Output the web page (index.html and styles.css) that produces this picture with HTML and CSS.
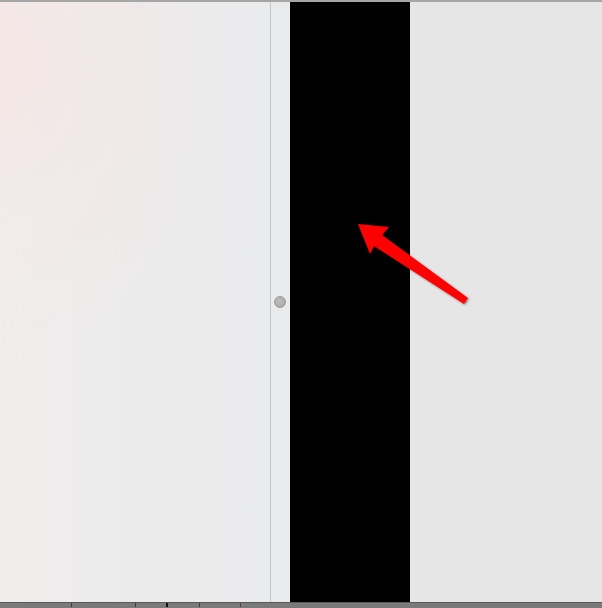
FILE: index.html
```html
<!DOCTYPE html>
<html>
<head>
<meta charset="utf-8">
<link rel="stylesheet" href="styles.css">
</head>
<body>
<div class="app">
  <div class="topline"></div>
  <div class="main">
    <div class="sidebar"></div>
    <div class="divider"><span class="handle"></span></div>
    <div class="preview"></div>
    <div class="inspector"></div>
  </div>
  <div class="statusbar">
    <span class="tick t1"></span><span class="tick t2"></span><span class="tick t3"></span><span class="tick t4"></span><span class="tick t5"></span>
  </div>
  <svg class="arrow" width="602" height="608" viewBox="0 0 602 608">
    <defs>
      <filter id="sh" x="-20%" y="-20%" width="140%" height="140%">
        <feDropShadow dx="1" dy="1" stdDeviation="1" flood-color="#000" flood-opacity="0.45"/>
      </filter>
    </defs>
    <polygon points="358,224 389,227 382,235 468,298 464,304 374,246 370,254" fill="#ff0000" filter="url(#sh)"/>
  </svg>
</div>
</body>
</html>
```
FILE: styles.css
```css
html, body {
  margin: 0;
  padding: 0;
  width: 602px;
  height: 608px;
  overflow: hidden;
  font-family: "Liberation Sans", Arial, sans-serif;
}
.app {
  position: relative;
  width: 602px;
  height: 608px;
  display: flex;
  flex-direction: column;
}
.topline {
  height: 2px;
  background: #a6a6a6;
  flex: none;
}
.main {
  flex: 1;
  display: flex;
  min-height: 0;
}
.sidebar {
  width: 270px;
  flex: none;
  background:
    radial-gradient(ellipse 220px 300px at 0% 10%, rgba(246, 228, 226, 0.7), rgba(246, 228, 226, 0) 100%),
    linear-gradient(90deg, #efeeed 0%, #ecebeb 50%, #eaebed 100%);
  border-right: 1px solid #c6c7c9;
}
.divider {
  width: 19px;
  flex: none;
  background: #e9eaec;
  display: flex;
  align-items: center;
  justify-content: center;
}
.handle {
  width: 12px;
  height: 12px;
  border-radius: 50%;
  background: radial-gradient(circle at 45% 40%, #bdbdbd, #a4a4a4);
  border: 1px solid #9c9c9c;
  box-sizing: border-box;
  margin-left: -1px;
}
.preview {
  width: 120px;
  flex: none;
  background: #000;
}
.inspector {
  flex: 1;
  background: #e6e6e6;
}
.statusbar {
  position: relative;
  height: 5px;
  flex: none;
  background: #7a7a7a;
  border-top: 1px solid #5a5a5a;
}
.tick {
  position: absolute;
  top: 0;
  width: 1px;
  height: 4px;
  background: #3a3a3a;
}
.t1 { left: 71px; }
.t2 { left: 135px; }
.t3 { left: 166px; width: 2px; background: #111; }
.t4 { left: 199px; }
.t5 { left: 240px; background: #6a3a3a; }
.arrow {
  position: absolute;
  left: 0;
  top: 0;
  pointer-events: none;
}
```
